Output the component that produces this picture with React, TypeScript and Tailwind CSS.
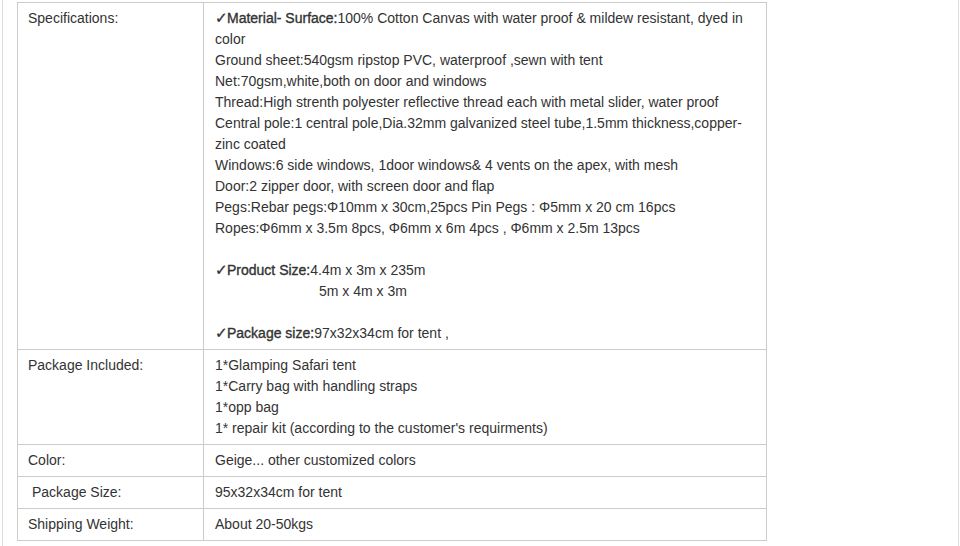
import React from "react";

const B = ({ children }: { children: React.ReactNode }) => (
  <span className="[-webkit-text-stroke:0.35px_#333333]">{children}</span>
);

const Check = () => (
  <span
    className="inline-block h-[21px] w-[12px] align-top text-[15px] leading-[21px] [-webkit-text-stroke:0.3px_#333333]"
    style={{ fontFamily: '"DejaVu Sans", sans-serif' }}
  >
    ✓
  </span>
);

export default function App() {
  const td = "border border-[#cccccc] align-top py-[5px]";
  return (
    <div
      className="h-[546px] w-[960px] bg-white text-[14px] leading-[21px] text-[#333333]"
      style={{ fontFamily: '"Liberation Sans", Arial, sans-serif' }}
    >
      <div className="ml-[2px] h-[546px] w-[957px] border-x border-[#dddddd] pl-[14px] pt-[2px]">
        <table className="w-[750px] border-collapse">
          <tbody>
            <tr>
              <td className={`${td} w-[186px] pl-[10px]`}>Specifications:</td>
              <td className={`${td} pl-[11px] pr-[8px]`}>
                <div className="h-[21px] whitespace-nowrap">
                  <Check />
                  <B>Material- Surface:</B>100% Cotton Canvas with water proof &amp; mildew resistant, dyed in
                </div>
                <div>color</div>
                <div>Ground sheet:540gsm ripstop PVC, waterproof ,sewn with tent</div>
                <div>Net:70gsm,white,both on door and windows</div>
                <div className="whitespace-nowrap">
                  Thread:High strenth polyester reflective thread each with metal slider, water proof
                </div>
                <div className="whitespace-nowrap">
                  Central pole:1 central pole,Dia.32mm galvanized steel tube,1.5mm thickness,copper-
                </div>
                <div>zinc coated</div>
                <div>Windows:6 side windows, 1door windows&amp; 4 vents on the apex, with mesh</div>
                <div>Door:2 zipper door, with screen door and flap</div>
                <div>Pegs:Rebar pegs:Φ10mm x 30cm,25pcs Pin Pegs : Φ5mm x 20 cm 16pcs</div>
                <div>Ropes:Φ6mm x 3.5m 8pcs, Φ6mm x 6m 4pcs , Φ6mm x 2.5m 13pcs</div>
                <div className="h-[21px]" />
                <div className="h-[21px] whitespace-nowrap">
                  <Check />
                  <B>Product Size:</B>4.4m x 3m x 235m
                </div>
                <div className="pl-[104px]">5m x 4m x 3m</div>
                <div className="h-[21px]" />
                <div className="h-[21px] whitespace-nowrap">
                  <Check />
                  <B>Package size:</B>97x32x34cm for tent ,
                </div>
              </td>
            </tr>
            <tr>
              <td className={`${td} pl-[10px]`}>Package Included:</td>
              <td className={`${td} pl-[11px]`}>
                <div>1*Glamping Safari tent</div>
                <div>1*Carry bag with handling straps</div>
                <div>1*opp bag</div>
                <div>1* repair kit (according to the customer's requirments)</div>
              </td>
            </tr>
            <tr>
              <td className={`${td} pl-[10px]`}>Color:</td>
              <td className={`${td} pl-[11px]`}>Geige... other customized colors</td>
            </tr>
            <tr>
              <td className={`${td} pl-[14px]`}>Package Size:</td>
              <td className={`${td} pl-[11px]`}>95x32x34cm for tent</td>
            </tr>
            <tr>
              <td className={`${td} pl-[10px]`}>Shipping Weight:</td>
              <td className={`${td} pl-[11px]`}>About 20-50kgs</td>
            </tr>
          </tbody>
        </table>
      </div>
    </div>
  );
}
